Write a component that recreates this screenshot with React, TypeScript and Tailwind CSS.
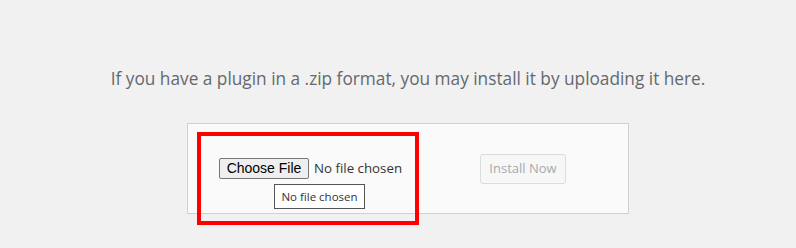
export default function App() {
  return (
    <div className="min-h-[248px] w-full bg-[#f1f1f1] pl-[20px] pt-[66px] font-['Open_Sans',sans-serif]">
      <p className="text-center text-[17.25px] leading-[26px] text-[#646970]">
        If you have a plugin in a .zip format, you may install it by uploading it here.
      </p>

      <div className="mt-[31px] flex justify-center">
        <div className="relative flex h-[91px] w-[442px] items-center border border-[#d0d0d4] bg-[#fafafa] pl-[31px]">
          <div className="flex w-[261px] items-center">
            <span className="flex h-[21px] w-[90px] items-center justify-center rounded-[2px] border border-[#767676] bg-[#efefef] font-['Liberation_Sans',Arial,sans-serif] text-[14px] text-black">
              Choose File
            </span>
            <span className="ml-[5px] text-[13.3px] text-[#333]">No file chosen</span>
          </div>

          <button
            type="button"
            disabled
            className="h-[30px] w-[86px] rounded-[3px] border border-[#dcdcde] bg-[#f6f7f7] text-[13px] text-[#a7aaad]"
          >
            Install Now
          </button>

          <div className="absolute left-[86px] top-[60px] flex h-[25px] w-[91px] items-center justify-center border border-[#555] bg-white text-[11.5px] text-[#333]">
            No file chosen
          </div>

          <div className="pointer-events-none absolute left-[9px] top-[8px] h-[93px] w-[222px] border-[4px] border-[#ff0000]" />
        </div>
      </div>
    </div>
  );
}
